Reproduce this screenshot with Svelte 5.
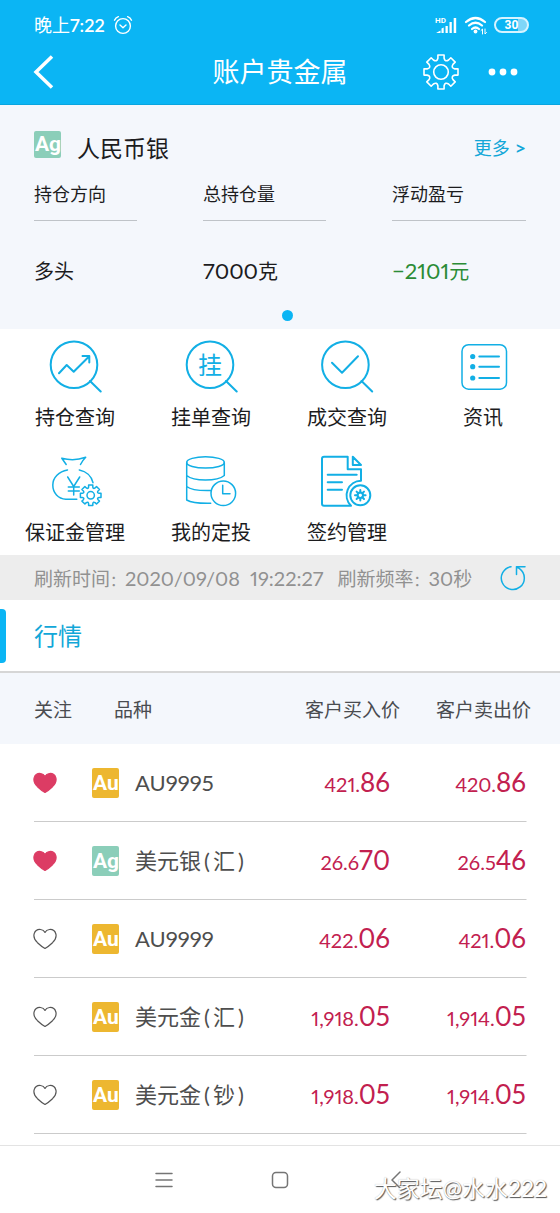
<script>
  const summary = [
    { label: '持仓方向', number: '', unit: '多头', tone: '' },
    { label: '总持仓量', number: '7000', unit: '克', tone: '' },
    { label: '浮动盈亏', number: '−2101', unit: '元', tone: 'loss' }
  ];

  const actions = [
    { icon: 'trend', label: '持仓查询' },
    { icon: 'pending', label: '挂单查询' },
    { icon: 'deal', label: '成交查询' },
    { icon: 'news', label: '资讯' },
    { icon: 'bag', label: '保证金管理' },
    { icon: 'invest', label: '我的定投' },
    { icon: 'contract', label: '签约管理' }
  ];

  let quotes = $state([
    { name: 'AU9995', form: '', metal: 'Au', liked: true, buy: ['421.', '86'], sell: ['420.', '86'] },
    { name: '美元银', form: '汇', metal: 'Ag', liked: true, buy: ['26.6', '70'], sell: ['26.5', '46'] },
    { name: 'AU9999', form: '', metal: 'Au', liked: false, buy: ['422.', '06'], sell: ['421.', '06'] },
    { name: '美元金', form: '汇', metal: 'Au', liked: false, buy: ['1,918.', '05'], sell: ['1,914.', '05'] },
    { name: '美元金', form: '钞', metal: 'Au', liked: false, buy: ['1,918.', '05'], sell: ['1,914.', '05'] }
  ]);

  // Outline of a cog: straight teeth joined by curved valleys.
  function gear(cx, cy, teeth, outer, base, valley, half) {
    const at = (angle, r, off) => {
      const x = cx + r * Math.sin(angle) + off * Math.cos(angle);
      const y = cy - r * Math.cos(angle) + off * Math.sin(angle);
      return x.toFixed(2) + ' ' + y.toFixed(2);
    };
    const step = (Math.PI * 2) / teeth;
    let d = 'M' + at(0, base, -half);
    for (let i = 0; i < teeth; i++) {
      const a = i * step;
      d += 'L' + at(a, outer, -half) + 'L' + at(a, outer, half) + 'L' + at(a, base, half);
      d += 'Q' + at(a + step / 2, valley, 0) + ' ' + at(a + step, base, -half);
    }
    return d + 'Z';
  }
</script>

<div class="screen">
  <header>
    <div class="status">
      <span class="time">晚上<b>7:22</b></span>
      <svg class="alarm" width="20" height="20" viewBox="0 0 20 20" aria-hidden="true">
        <circle cx="10" cy="11" r="7.4" />
        <path d="M1.5 5.2Q2.6 2.6 5.4 1.6M18.500 5.200Q17.400 2.600 14.600 1.600M7 10l3 2.800L13 10" />
      </svg>
      <div class="signals">
        <svg width="24" height="20" viewBox="0 0 24 20" aria-hidden="true">
          <text x="1" y="7.500" class="hd">HD</text>
          <path class="bars" d="M2 18l4.500-2.500V18zM7.500 18v-4.500l2.200-1V18zM11.500 18v-7h2.300v7zM15.500 18V7h2.300v11zM19.700 18V3h2.500v15z" />
        </svg>
        <svg width="24" height="20" viewBox="0 0 24 20" aria-hidden="true">
          <path class="wave" d="M2 7Q11.500-1 21 7M5 10.500Q11.500 5 18 10.500M8 14q3.500-3 7 0" />
          <circle class="bars" cx="11.500" cy="16.500" r="1.900" />
          <path class="tiny" d="M18.500 19v-5l-1.500 1.500M21 14v5l1.500-1.500" />
        </svg>
        <span class="battery">30</span>
      </div>
    </div>
    <nav class="top">
      <button class="back" aria-label="返回">
        <svg width="22" height="36" viewBox="0 0 22 36"><path d="M19 2.500L3 18l16 15.500" /></svg>
      </button>
      <h1>账户贵金属</h1>
      <button aria-label="设置">
        <svg class="cog" width="38" height="38" viewBox="0 0 38 38">
          <path d={gear(19, 19, 8, 17, 13.8, 10.6, 3.1)} />
          <circle cx="19" cy="19" r="7.3" />
        </svg>
      </button>
      <button aria-label="更多选项">
        <svg class="dots" width="30" height="8" viewBox="0 0 30 8">
          <circle cx="4" cy="4" r="3.4" /><circle cx="15" cy="4" r="3.4" /><circle cx="26" cy="4" r="3.4" />
        </svg>
      </button>
    </nav>
  </header>

  <section class="holding">
    <div class="product">
      <span class="badge square Ag">Ag</span>
      <h2>人民币银</h2>
      <a href="#more">更多 <span>&gt;</span></a>
    </div>
    <dl>
      {#each summary as item}
        <div>
          <dt>{item.label}</dt>
          <dd class={item.tone}><span class="num">{item.number}</span>{item.unit}</dd>
        </div>
      {/each}
    </dl>
    <i class="page-dot"></i>
  </section>

  <section class="actions">
    {#each actions as action}
      <button>
        <svg width="54" height="54" viewBox="0 0 54 54" aria-hidden="true">
          {#if action.icon === 'trend'}
            <circle cx="26" cy="24.700" r="23.300" />
            <path d="M42 41l10.700 10.500M11 33.300l7.700-8.300 7 6.700L41 16.500M34.500 16h6.800v6.500" />
          {:else if action.icon === 'pending'}
            <circle cx="26" cy="24.700" r="23.300" />
            <path d="M42 41l10.700 10.500" />
            <text x="26" y="34" text-anchor="middle">挂</text>
          {:else if action.icon === 'deal'}
            <circle cx="25.400" cy="24.700" r="23.300" />
            <path d="M41.500 41l10.700 10.500M12 22.700l10 10 16-16.400" />
          {:else if action.icon === 'news'}
            <rect class="fine" x="6" y="4.700" width="44.500" height="44.500" rx="6.500" />
            <path d="M23.300 16.500H43M23.300 26.700H43M23.300 38H43" />
            <g class="solid"><circle cx="16.700" cy="16.500" r="2.600" /><circle cx="16.700" cy="26.700" r="2.600" /><circle cx="16.700" cy="38" r="2.600" /></g>
          {:else if action.icon === 'bag'}
            <g class="fine">
              <path d="M18.200 9.500L13.800 3.200Q26 6.500 37.700 2.300Q34.500 5.500 32.500 9.500" />
              <path d="M19.500 15C11 16.500 4.800 22.500 4.800 30c0 8 5.500 13.800 13 14.200h11M31.300 15C38 16.300 43.500 21 45 27.700" />
              <path d="M19.700 22l6 9.500 6-9.500M25.700 31.500V40M20.300 32h11M20.300 36h11" />
              <path d={gear(42.7, 40.3, 8, 10.3, 8.3, 6.5, 2.1)} />
              <circle cx="42.700" cy="40.300" r="3.700" />
            </g>
          {:else if action.icon === 'invest'}
            <g class="fine">
              <ellipse cx="21.500" cy="7.400" rx="18.800" ry="5.700" />
              <path d="M2.700 7.400V45Q9 48.700 26.700 48.300M40.300 7.400V20.500M2.700 20.500Q8 25 21.500 25T40.300 20.500M2.700 31.500Q8 36 26.700 35.500" />
              <circle cx="39.300" cy="38.300" r="12.300" />
              <path d="M38.700 30.300v8.400H46" />
            </g>
          {:else}
            <path d="M31 50.700H4Q2 50.700 2 48.700V3.700Q2 1.700 4 1.700H27.700V14.300H41V25.800A14.500 14.500 0 0 0 31 50.700zM32.800 1.700V10H41zM7.700 19.700h29M7.700 27.300H22M7.700 34.700H22" />
            <circle cx="40.300" cy="40.300" r="10" />
            <circle cx="40.300" cy="40.300" r="2.700" />
            <path d="M40.300 35v2.500M40.300 43v2.600M35 40.300h2.500M43 40.300h2.600M36.600 36.600l1.700 1.700M42.300 42.300l1.700 1.700M44 36.600l-1.700 1.700M38.300 42.300l-1.700 1.700" />
          {/if}
        </svg>
        <span>{action.label}</span>
      </button>
    {/each}
  </section>

  <div class="refresh">
    <p>刷新时间<span class="colon">：</span><span class="num date">2020/09/08</span><span class="num clock">19:22:27</span>刷新频率<span class="colon">：</span><span class="num">30</span>秒</p>
    <button aria-label="刷新">
      <svg width="26" height="26" viewBox="0 0 26 26"><path d="M11 1.700A11.500 11.500 0 1 0 19.500 3.700L16.500 1.700M25 1.700h-8.500V9.500" /></svg>
    </button>
  </div>

  <div class="market"><i></i><h2>行情</h2></div>

  <table>
    <thead>
      <tr><th class="fav">关注</th><th class="kind">品种</th><th class="buy">客户买入价</th><th class="sell">客户卖出价</th></tr>
    </thead>
    <tbody>
      {#each quotes as quote}
        <tr>
          <td class="fav">
            <button aria-label="关注" aria-pressed={quote.liked} onclick={() => (quote.liked = !quote.liked)}>
              <svg class:liked={quote.liked} width="24" height="22" viewBox="0 0 24 22">
                <path d="M12 20.500Q8.500 18.500 4.500 14.700C1 11.200.500 8 1.200 5.700C2.200 2.500 5 1.300 7.500 1.500C9.600 1.700 11.200 2.800 12 4.400C12.800 2.800 14.400 1.700 16.500 1.500C19 1.300 21.800 2.500 22.800 5.700C23.500 8 23 11.200 19.500 14.700Q15.500 18.500 12 20.500Z" />
              </svg>
            </button>
          </td>
          <td class="kind">
            <div>
              <span class="badge {quote.metal}">{quote.metal}</span>
              <span>{quote.name}{#if quote.form}<span class="form">(<span>{quote.form}</span>)</span>{/if}</span>
            </div>
          </td>
          <td class="buy price">{quote.buy[0]}<b>{quote.buy[1]}</b></td>
          <td class="sell price">{quote.sell[0]}<b>{quote.sell[1]}</b></td>
        </tr>
      {/each}
    </tbody>
  </table>

  <footer>
    <button aria-label="菜单"><svg width="18" height="18" viewBox="0 0 18 18"><path d="M1 2.500h16M1 9h16M1 15.500h16" /></svg></button>
    <button aria-label="主页"><svg width="18" height="18" viewBox="0 0 18 18"><rect x="1.500" y="1.500" width="15" height="15" rx="3.500" /></svg></button>
    <button aria-label="后退"><svg width="18" height="18" viewBox="0 0 18 18"><path d="M13 1L5 9l8 8" /></svg></button>
    <span class="watermark">大家坛@水水222</span>
  </footer>
</div>

<style>
  :global(body) { margin: 0; background: #fff; }
  .screen {
    font-family: Lato, "Noto Sans CJK SC", sans-serif;
    font-variant-numeric: proportional-nums;
    color: #1c1c1e;
    font-weight: 400;
  }
  svg { display: block; fill: none; stroke-linecap: round; stroke-linejoin: round; }
  button { display: block; border: 0; padding: 0; background: none; font: inherit; color: inherit; }
  h1, h2, p, dl, dd { margin: 0; font-weight: 400; }

  header { background: #0bb5f4; color: #fff; border-bottom: 1px solid #09a5df; }
  header svg { stroke: #fff; }
  .status { display: flex; align-items: center; height: 50px; padding: 0 31px 0 34px; }
  .time { font-size: 18px; line-height: 24px; }
  .time b { font-weight: 600; }
  .alarm { margin-left: 8px; stroke-width: 1.4; }
  .signals { display: flex; align-items: center; gap: 6px; margin-left: auto; }
  .hd { font: 700 8px Roboto, sans-serif; fill: #fff; stroke: none; }
  header .bars { fill: #fff; stroke: none; }
  .wave { stroke-width: 2.2; }
  .tiny { stroke-width: 1; }
  .battery {
    box-sizing: border-box;
    width: 35px;
    border: 2px solid #d6f3ff;
    border-radius: 8px;
    background: linear-gradient(90deg, transparent 70%, #7ed6f8 70%);
    font: 700 12px/12px Roboto, sans-serif;
    text-align: center;
  }
  .top { display: flex; align-items: center; height: 44px; padding: 0 42px 10px 33px; }
  .back { width: 72px; }
  .back svg { stroke-width: 3.5; stroke-linecap: butt; stroke-linejoin: miter; }
  .top h1 { flex: 1; padding-left: 33px; font-size: 27px; line-height: 40px; text-align: center; }
  .cog { stroke-width: 1.6; }
  .dots { margin-left: 28px; fill: #fff; }
  header .dots { stroke: none; }

  .holding { padding: 24px 34px 8px; background: #f4f7fc; }
  .product { display: flex; align-items: flex-start; height: 36px; padding-top: 2px; }
  .product h2 { margin-left: 16px; font-size: 23px; line-height: 34px; }
  .product a { margin-left: auto; color: #12a7d8; font-size: 18px; line-height: 32px; text-decoration: none; }
  .product a span { font-size: 20px; font-weight: 600; }
  dl { display: grid; grid-template-columns: 103fr 123fr 134fr; gap: 66px; }
  dt { padding: 15px 0 14px; border-bottom: 1px solid #bfc3c8; font-size: 18px; line-height: 24px; }
  dd { padding: 35px 0 24px; font-size: 20px; line-height: 30px; white-space: nowrap; }
  dd .num { font-size: 22px; }
  .loss { color: #2b8c36; }
  .page-dot { display: block; width: 11px; height: 11px; margin-left: calc(50% + 2px); border-radius: 50%; background: #0bb5f4; }
  .badge {
    flex: none;
    width: 27px;
    height: 30px;
    overflow: hidden;
    border-radius: 2px;
    color: #fff;
    font: 700 21px/30px Roboto, sans-serif;
    text-indent: 1px;
  }
  .square { height: 27px; line-height: 27px; }
  .Au { background: #edb730; }
  .Ag { background: #8bceb9; }

  .actions { display: grid; grid-template-columns: repeat(4, 1fr); row-gap: 26px; padding: 11px 9px 11px 7px; }
  .actions button { display: flex; flex-direction: column; align-items: center; gap: 11px; }
  .actions svg { stroke: #12afe5; stroke-width: 2; }
  .actions .fine { stroke-width: 1.5; }
  .actions .solid { fill: #12afe5; stroke: none; }
  .actions text { font: 400 24px "Noto Sans CJK SC", sans-serif; fill: #12afe5; stroke: none; }
  .actions span { font-size: 20px; line-height: 24px; }

  .refresh { display: flex; align-items: center; justify-content: space-between; height: 45px; padding: 0 34px; background: #ededed; color: #919191; }
  .refresh p { padding-top: 2px; font-size: 19px; line-height: 28px; white-space: nowrap; }
  .refresh .colon { font-size: 15px; }
  .refresh .num { font-size: 20px; }
  .refresh .date { margin-right: 10px; }
  .refresh .clock { margin-right: 14px; }
  .refresh svg { stroke: #12afe5; stroke-width: 1.5; }

  .market { display: flex; align-items: center; gap: 28px; height: 71px; border-bottom: 2px solid #d6d6d6; color: #12a7d8; }
  .market i { width: 6px; height: 54px; border-radius: 0 4px 4px 0; background: #0bb5f4; }
  .market h2 { font-size: 24px; line-height: 36px; }

  table { width: 100%; border-collapse: collapse; table-layout: fixed; }
  th, td { padding: 0; font-weight: 400; text-align: left; }
  th { height: 71px; background: #f4f7fc; color: #4a4c50; font-size: 19px; }
  td { height: 78px; color: #4e4e4e; font-size: 22px; line-height: 32px; }
  tbody tr { background: linear-gradient(#cbcbcb, #cbcbcb) 50% 100% / calc(100% - 67px) 1px no-repeat; }
  th.fav { width: 58px; padding-left: 34px; }
  td.fav { padding-left: 33px; }
  th.kind { padding-left: 22px; }
  .kind div { display: flex; align-items: center; gap: 16px; white-space: nowrap; }
  .form { padding-left: 3px; }
  .form span { padding: 0 3px; }
  .buy { width: 136px; text-align: right; }
  th.sell { width: 131px; padding-right: 29px; }
  .sell { text-align: right; }
  td.buy { padding-right: 10px; }
  td.sell { padding-right: 34px; }
  .price { color: #c2204f; font-size: 20px; }
  .price b { font-size: 26px; font-weight: 400; }
  .fav svg { stroke: #555; stroke-width: 1.2; }
  .fav svg.liked { fill: #dc3c64; stroke: #dc3c64; }

  footer { position: relative; display: flex; justify-content: center; gap: 98px; margin-top: 11px; padding: 25px 0 24px; border-top: 1px solid #e3e3e3; }
  footer svg { stroke: #757575; stroke-width: 1.5; }
  .watermark {
    position: absolute;
    right: 13px;
    bottom: 8px;
    color: #fff;
    font-size: 23px;
    line-height: 34px;
    text-shadow: 1px 1px 1px #555, 0 0 1px #bbb;
  }
</style>
